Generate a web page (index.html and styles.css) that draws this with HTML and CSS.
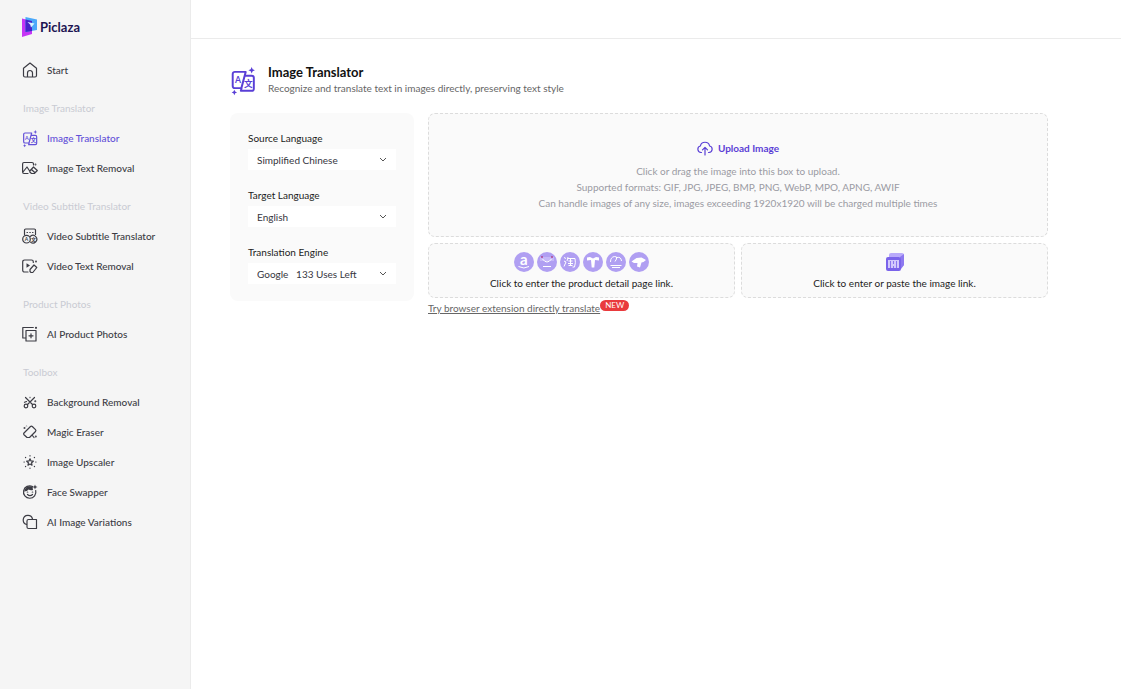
FILE: index.html
```
<!DOCTYPE html>
<html lang="en">
<head>
	<meta charset="utf-8">
	<meta name="viewport" content="width=device-width, initial-scale=1">
	<title>Image Translator - Piclaza</title>
	<link rel="stylesheet" href="styles.css">
</head>
<body>
<div class="app">
	<nav class="sidebar">
		<a class="logo" href="#">
			<svg width="16" height="20" viewBox="0 0 16 20">
				<path fill="#c535f5" d="M0 1.500L10 4v13L0 20z"/>
				<path fill="#4aa8fa" d="M3.500 0L15 2.500V13l-11.500 2z"/>
				<path fill="#4723c9" d="M3.500 2.400L10 4v10L3.500 15z"/>
				<path fill="#d7f3ff" d="M5.500 5l7 1.500-3.500 4-.7-2.700z"/>
			</svg>
			<span>Piclaza</span>
		</a>
		<a class="item" href="#">
			<svg class="icon" viewBox="0 0 16 16"><path d="M1.500 6.200L8 1l6.500 5.200v7.300a1.500 1.500 0 0 1-1.500 1.500H3a1.500 1.500 0 0 1-1.500-1.500zM5.500 15v-4a2.500 2.500 0 0 1 5 0v4"/></svg>
			Start
		</a>
		<h3>Image Translator</h3>
		<a class="item active" href="#">
			<svg class="icon translate" viewBox="0 0 24 24">
				<path d="M14.500 4.500h-10a2 2 0 0 0-2 2v11a2 2 0 0 0 2 2h6L14.500 4.500zM14 8h6a2 2 0 0 1 2 2v10a2 2 0 0 1-2 2H10l.7-2.500"/>
				<path class="fill" d="M20 0l.9 2.100L23 3l-2.100.9L20 6l-.9-2.100L17 3l2.100-.9zM4 21l.8 1.700 1.700.8-1.700.8L4 26l-.8-1.700-1.700-.8 1.700-.8z"/>
				<text x="4.500" y="14.500" font-size="8">A</text>
				<text class="cjk" x="13" y="18.200" font-size="8">文</text>
			</svg>
			Image Translator
		</a>
		<a class="item" href="#">
			<svg class="icon" viewBox="0 0 16 16"><path d="M6 13.500H2A1.500 1.500 0 0 1 .6 12V4A1.500 1.500 0 0 1 2 2.500h8A1.500 1.500 0 0 1 11.500 4v1M1 12l4-5 3 4.500M7.800 11l3.700-4 3.800 3.500-3 3H9.500L7.800 12zM9.500 9.500l3.500 3.200"/><circle cx="13.500" cy="4.500" r=".3"/></svg>
			Image Text Removal
		</a>
		<h3>Video Subtitle Translator</h3>
		<a class="item" href="#">
			<svg class="icon" viewBox="0 0 16 16"><path d="M2.500 6.500V2.200A1.200 1.200 0 0 1 3.700 1h8.600a1.200 1.200 0 0 1 1.200 1.200v4.300M5 4.500h.5M7.800 4.500h.5M10.500 4.500h.5"/><circle cx="4.500" cy="11.200" r="3.800"/><path d="M8.500 8.300a3.800 3.800 0 1 1 0 5.800"/>
				<text x="2.700" y="13.200" font-size="5">A</text><text class="cjk" x="8.900" y="13.100" font-size="5">文</text></svg>
			Video Subtitle Translator
		</a>
		<a class="item" href="#">
			<svg class="icon" viewBox="0 0 16 16"><path d="M6 14H2.500A1.800 1.800 0 0 1 .7 12.200V3.800A1.800 1.800 0 0 1 2.500 2h7a1.800 1.800 0 0 1 1.800 1.800v.7M8 11.500l4-4.500 2.800 2.500-4 5H9L8 13.500z"/><path class="fill" d="M4.500 5.200l3.500 2.300-3.500 2.300z"/><circle cx="14" cy="3.500" r=".4"/></svg>
			Video Text Removal
		</a>
		<h3>Product Photos</h3>
		<a class="item" href="#">
			<svg class="icon" viewBox="0 0 16 16"><path d="M3.500 12H.8V1.500h10.500M4 4.500h10V15H4zM9 7.800v4M7 9.800h4"/><circle cx="14" cy="1.800" r=".5"/></svg>
			AI Product Photos
		</a>
		<h3>Toolbox</h3>
		<a class="item" href="#">
			<svg class="icon" viewBox="0 0 16 16"><path d="M3.500 3.500l7 7M12.500 3.500l-7 7M2.500 8.300l2-.8"/><circle cx="4" cy="12" r="1.800"/><circle cx="12" cy="12" r="1.800"/><circle cx="8" cy="3.500" r=".2"/><circle cx="13.300" cy="7.300" r=".4"/></svg>
			Background Removal
		</a>
		<a class="item" href="#">
			<svg class="icon" viewBox="0 0 16 16"><path d="M2 9l6.500-6.500a1.300 1.300 0 0 1 1.800 0l3.200 3.200a1.300 1.300 0 0 1 0 1.800L7.500 13.500H5L2 10.700a1.200 1.200 0 0 1 0-1.700zM10 11l2 2.500"/><circle cx="2.500" cy="4" r=".4"/><circle cx="4.500" cy="2.300" r=".1"/><circle cx="13.800" cy="12.500" r=".4"/></svg>
			Magic Eraser
		</a>
		<a class="item" href="#">
			<svg class="icon" viewBox="0 0 16 16"><path d="M8 4.800l1 2.100 2.300.3-1.700 1.600.4 2.300-2-1.100-2 1.100.4-2.300-1.700-1.600 2.300-.3z"/><path d="M8 1.700v.3M8 14v.3M2 8h.3M13.700 8h.3M3.500 3.500l.2.2M12.300 3.700l.2-.2M3.500 12.500l.2-.2M12.300 12.300l.2.2"/></svg>
			Image Upscaler
		</a>
		<a class="item" href="#">
			<svg class="icon" viewBox="0 0 16 16"><path d="M13.700 6.500a6.200 6.200 0 1 1-3.200-4M5.500 10.500q2.500 2.200 5 0"/><path class="fill" d="M2 7.500q3.500 0 4.500-2 2 1.200 4.500.5l-.5-3.300Q4 .5 2 7.500zM13 .5l.7 1.800 1.800.7-1.800.7L13 5.500l-.7-1.800-1.800-.7 1.800-.7z"/><circle cx="5.500" cy="8.300" r=".2"/><circle cx="10.500" cy="8.300" r=".2"/></svg>
			Face Swapper
		</a>
		<a class="item" href="#">
			<svg class="icon" viewBox="0 0 16 16"><path d="M4.500 10.500a4.700 4.700 0 1 1 6-5.500M6.500 5.500h8v9h-8a1.500 1.500 0 0 1-1.500-1.500V7a1.500 1.500 0 0 1 1.500-1.500z"/></svg>
			AI Image Variations
		</a>
	</nav>
	<div class="page">
		<header class="topbar"></header>
		<main>
			<div class="title">
				<svg class="icon translate" viewBox="0 0 24 24">
					<path d="M14.500 4.500h-10a2 2 0 0 0-2 2v11a2 2 0 0 0 2 2h6L14.500 4.500zM14 8h6a2 2 0 0 1 2 2v10a2 2 0 0 1-2 2H10l.7-2.500"/>
					<path class="fill" d="M20 0l.9 2.100L23 3l-2.100.9L20 6l-.9-2.100L17 3l2.100-.9zM4 21l.8 1.700 1.700.8-1.700.8L4 26l-.8-1.700-1.700-.8 1.700-.8z"/>
					<text x="4.500" y="14.500" font-size="8">A</text>
					<text class="cjk" x="13" y="18.200" font-size="8">文</text>
				</svg>
				<div>
					<h1>Image Translator</h1>
					<p>Recognize and translate text in images directly, preserving text style</p>
				</div>
			</div>
			<div class="workspace">
				<form class="options">
					<div class="field">
						<label for="source">Source Language</label>
						<select id="source"><option>Simplified Chinese</option></select>
					</div>
					<div class="field">
						<label for="target">Target Language</label>
						<select id="target"><option>English</option></select>
					</div>
					<div class="field">
						<label for="engine">Translation Engine</label>
						<select id="engine"><option>Google &nbsp; 133 Uses Left</option></select>
					</div>
				</form>
				<div class="sources">
					<div class="box drop">
						<button class="upload" type="button">
							<svg width="16" height="16" viewBox="0 0 16 16"><path d="M4.500 12.500H4a3.300 3.300 0 0 1-.6-6.500 4.700 4.700 0 0 1 9.200 0 3.300 3.300 0 0 1-.6 6.500h-.5M8 15V7.500M5.500 9.800L8 7.300l2.500 2.500"/></svg>
							Upload Image
						</button>
						<p>Click or drag the image into this box to upload.</p>
						<p>Supported formats: GIF, JPG, JPEG, BMP, PNG, WebP, MPO, APNG, AWIF</p>
						<p>Can handle images of any size, images exceeding 1920x1920 will be charged multiple times</p>
					</div>
					<div class="links">
						<button class="box" type="button">
							<span class="shops">
								<svg viewBox="0 0 20 20"><circle cx="10" cy="10" r="10"/><text x="6" y="13" font-size="15" font-weight="700">a</text><path class="line" d="M4.500 14.500q5.500 3 10.500 0"/></svg>
								<svg viewBox="0 0 20 20"><circle cx="10" cy="10" r="10"/><path fill="#c5b7f8" d="M3 5h14v4H3z"/><path class="line" d="M5.500 7q4.500 6 9 0M6 14.500h8"/><circle class="dot" cx="5" cy="5" r="1"/><circle class="dot" cx="15" cy="5" r="1"/></svg>
								<svg viewBox="0 0 20 20"><circle cx="10" cy="10" r="10"/><path class="line" d="M4 5.500l2 1M4 9l2 1-2 4.500M8 5L7 9M8 6.500h7q1 4-.5 8.500h-2M8.500 9h4M8 11.500h5M10.500 7v6.500M8.500 13.500h4"/></svg>
								<svg viewBox="0 0 20 20"><circle cx="10" cy="10" r="10"/><path class="white" d="M4 5.500l3-.5 3 1.500L13 5l3 .5v3l-4-.5-.7 7.500H8.700L8 8l-4 .5z"/></svg>
								<svg viewBox="0 0 20 20"><circle cx="10" cy="10" r="10"/><path class="line" d="M4.500 10q0-5 4-5.500 3-.3 2 2.500L9 9.500M11 5.500q4-1 4.500 3.500M4.500 13.500h11M6 15.500h8"/></svg>
								<svg viewBox="0 0 20 20"><circle cx="10" cy="10" r="10"/><path class="white" d="M2.500 9.500l5-3.500 5-.5 4.500 2.500-2.500 2-2 .5L11 15.500l-3-1 .5-3.500L5 11z"/></svg>
							</span>
							Click to enter the product detail page link.
						</button>
						<button class="box" type="button">
							<svg width="20" height="20" viewBox="0 0 20 20">
								<path fill="#b9aafa" d="M6 1h11a2 2 0 0 1 2 2v10l-3 3V5H4V3a2 2 0 0 1 2-2z"/>
								<path fill="#8d78f0" d="M15 5l4-3v11l-3 4z"/>
								<rect x="1" y="5" width="15" height="14" rx="2" fill="#7a63ea"/>
								<rect x="3" y="8" width="11" height="8" fill="#d2c9fc"/>
								<path stroke="#8a76ee" fill="none" d="M5.500 9v7M8.500 9v3M8.500 14v2M11.500 9v7"/>
							</svg>
							Click to enter or paste the image link.
						</button>
					</div>
					<div class="extension"><a href="#">Try browser extension directly translate</a><span class="badge">NEW</span></div>
				</div>
			</div>
		</main>
	</div>
</div>
</body>
</html>
```
FILE: styles.css
```
* {
	box-sizing: border-box;
}
body {
	margin: 0;
	font: 10px/16px Lato, "Liberation Sans", sans-serif;
	color: #1c1c22;
	background: #fff;
}
h1, h3, p {
	margin: 0;
}
button, select {
	font: inherit;
	color: inherit;
	border: 0;
	cursor: pointer;
}
.cjk {
	font-family: "Noto Sans CJK SC", sans-serif;
}
.app {
	display: flex;
	min-height: 100vh;
}

/* sidebar */
.sidebar {
	flex: none;
	width: 191px;
	padding: 16px 22px;
	background: #f5f5f5;
	border-right: 1px solid #ebebeb;
}
.logo {
	display: flex;
	align-items: center;
	gap: 2px;
	height: 22px;
	margin-bottom: 17px;
	color: #1d1452;
	font-size: 13px;
	font-weight: 700;
	text-decoration: none;
}
.item {
	display: flex;
	align-items: center;
	gap: 9px;
	height: 30px;
	color: #3c3c44;
	font-weight: 500;
	text-decoration: none;
	white-space: nowrap;
}
.item.active {
	color: #6350d8;
}
.sidebar h3 {
	margin: 8px 0 0 1px;
	font-size: 10px;
	font-weight: 400;
	line-height: 30px;
	color: #c9cbd3;
}
.icon {
	flex: none;
	width: 16px;
	height: 16px;
	fill: none;
	stroke: currentColor;
	stroke-width: 1.2;
	stroke-linecap: round;
	stroke-linejoin: round;
	overflow: visible;
}
.icon.translate {
	stroke-width: 1.8;
}
.icon text {
	fill: currentColor;
	stroke: none;
	font-weight: 700;
}
.icon .fill {
	fill: currentColor;
	stroke: none;
}

/* main */
.page {
	flex: 1;
	min-width: 0;
}
.topbar {
	height: 39px;
	border-bottom: 1px solid #ebebeb;
}
main {
	padding: 25px 73px 40px 39px;
}
.title {
	display: flex;
	align-items: center;
	gap: 12px;
	height: 32px;
	margin-bottom: 17px;
	color: #5a3fd6;
}
.title .icon {
	width: 26px;
	height: 26px;
}
.title h1 {
	font-size: 13px;
	font-weight: 700;
	line-height: 16px;
	color: #111;
}
.title p {
	color: #666;
}
.workspace {
	display: grid;
	grid-template-columns: 184px 1fr;
	gap: 14px;
	align-items: start;
}
.options {
	display: grid;
	gap: 17px;
	padding: 17px 18px;
	background: #fafafa;
	border-radius: 8px;
}
.field {
	display: grid;
	gap: 3px;
}
.field select {
	appearance: none;
	height: 21px;
	padding: 0 24px 0 9px;
	color: #36363e;
	background: #fff url("data:image/svg+xml,%3Csvg xmlns='http://www.w3.org/2000/svg' width='8' height='6'%3E%3Cpath d='M1 1l3 3 3-3' fill='none' stroke='%23555'/%3E%3C/svg%3E") no-repeat right 9px center;
}
.sources {
	display: grid;
	gap: 6px;
}
.box {
	display: flex;
	flex-direction: column;
	align-items: center;
	background: #fafafa;
	border: 1px dashed #dcdcdc;
	border-radius: 7px;
}
.drop {
	padding: 26px 16px 25px;
	color: #9a9aa3;
}
.upload {
	display: flex;
	align-items: center;
	gap: 5px;
	height: 16px;
	margin-bottom: 7px;
	padding: 0;
	background: none;
	color: #5a3fd6;
	font-weight: 700;
}
.upload svg {
	fill: none;
	stroke: currentColor;
	stroke-width: 1.2;
	stroke-linecap: round;
	stroke-linejoin: round;
}
.links {
	display: grid;
	grid-template-columns: 1fr 1fr;
	gap: 6px;
}
.links .box {
	gap: 3px;
	padding: 8px 8px 6px;
}
.shops {
	display: flex;
	gap: 3px;
}
.shops svg {
	width: 20px;
	height: 20px;
	fill: #b09ff2;
	overflow: visible;
}
.shops text,
.shops .white {
	fill: #fff;
}
.shops .line {
	fill: none;
	stroke: #fff;
}
.shops .dot {
	fill: #b0468f;
}
.extension {
	display: flex;
	align-items: flex-start;
	margin-top: -4px;
}
.extension a {
	color: #666;
}
.badge {
	padding: 0 5px;
	border-radius: 6px;
	background: #e93a3d;
	color: #fff;
	font-size: 8px;
	line-height: 11px;
}
```
